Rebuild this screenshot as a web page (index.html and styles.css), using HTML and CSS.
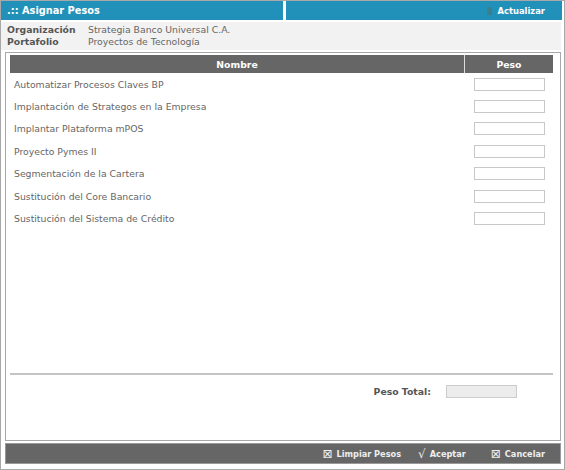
FILE: index.html
```html
<!DOCTYPE html>
<html lang="es">
<head>
<meta charset="utf-8">
<title>Asignar Pesos</title>
<link rel="stylesheet" href="styles.css">
</head>
<body>
<div class="page">
  <div class="topbar">
    <div class="tb-left">.:: Asignar Pesos</div>
    <div class="tb-right"><span class="tb-icon"></span>Actualizar</div>
  </div>
  <div class="info">
    <div class="info-row"><span class="info-label">Organización</span><span class="info-value">Strategia Banco Universal C.A.</span></div>
    <div class="info-row"><span class="info-label">Portafolio</span><span class="info-value">Proyectos de Tecnología</span></div>
  </div>
  <div class="panel">
    <div class="grid">
      <div class="grid-head">
        <div class="col-name">Nombre</div>
        <div class="col-peso">Peso</div>
      </div>
      <div class="grid-body">
        <div class="row"><div class="cell-name">Automatizar Procesos Claves BP</div><div class="cell-peso"><input class="peso-input" type="text"></div></div>
        <div class="row"><div class="cell-name">Implantación de Strategos en la Empresa</div><div class="cell-peso"><input class="peso-input" type="text"></div></div>
        <div class="row"><div class="cell-name">Implantar Plataforma mPOS</div><div class="cell-peso"><input class="peso-input" type="text"></div></div>
        <div class="row"><div class="cell-name">Proyecto Pymes II</div><div class="cell-peso"><input class="peso-input" type="text"></div></div>
        <div class="row"><div class="cell-name">Segmentación de la Cartera</div><div class="cell-peso"><input class="peso-input" type="text"></div></div>
        <div class="row"><div class="cell-name">Sustitución del Core Bancario</div><div class="cell-peso"><input class="peso-input" type="text"></div></div>
        <div class="row"><div class="cell-name">Sustitución del Sistema de Crédito</div><div class="cell-peso"><input class="peso-input" type="text"></div></div>
      </div>
    </div>
    <div class="total">
      <span class="total-label">Peso Total:</span>
      <input class="total-input" type="text" disabled>
    </div>
  </div>
  <div class="footer">
    <span class="btn"><span class="btn-ico">⊠</span>Limpiar Pesos</span>
    <span class="btn"><span class="btn-ico">√</span>Aceptar</span>
    <span class="btn"><span class="btn-ico">⊠</span>Cancelar</span>
  </div>
</div>
</body>
</html>
```
FILE: styles.css
```css
* { box-sizing: border-box; }
html, body { margin: 0; padding: 0; background: #fff; }
body {
  font-family: "DejaVu Sans", Verdana, sans-serif;
  font-size: 9.3px;
  color: #666;
}
.page {
  width: 565px;
  height: 470px;
  border: 1px solid #a8a8a8;
  display: flex;
  flex-direction: column;
}
.topbar {
  display: flex;
  gap: 3px;
  height: 19px;
  margin-right: 2px;
}
.tb-left, .tb-right {
  background: #2191b9;
  color: #fff;
  font-weight: bold;
  display: flex;
  align-items: center;
}
.tb-left { width: 282px; padding-left: 6px; font-size: 9.8px; }
.tb-right { flex: 1; justify-content: flex-end; padding-right: 17px; font-size: 8.4px; }
.tb-icon {
  width: 5px;
  height: 8px;
  background: #4f7266;
  opacity: 0.55;
  margin-right: 6px;
}
.info {
  margin: 2px 3px 0 0;
  background: #f2f2f2;
  height: 28px;
  padding: 1px 0 0 6px;
}
.info-row { display: flex; height: 12.5px; align-items: center; }
.info-label { width: 81px; font-weight: bold; color: #555; }
.info-value { color: #666; }
.panel {
  margin: 2px 3px 0 4px;
  border: 1px solid #a8a8a8;
  height: 389px;
  padding: 2px 7px 0 4px;
  display: flex;
  flex-direction: column;
}
.grid { flex: 1; display: flex; flex-direction: column; border-bottom: 2px solid #c4c4c4; }
.grid-head {
  display: flex;
  height: 18px;
  background: #666;
  color: #fff;
  font-weight: bold;
}
.col-name { flex: 1; display: flex; align-items: center; justify-content: center; border-right: 1px solid #ddd; }
.col-peso { width: 88px; display: flex; align-items: center; justify-content: center; }
.grid-body { padding-top: 0; }
.row { display: flex; height: 22.4px; align-items: center; }
.cell-name { flex: 1; padding-left: 4px; }
.cell-peso { width: 88px; display: flex; justify-content: center; }
.peso-input {
  width: 71px;
  height: 13px;
  border: 1px solid #c8c8c8;
  background: #fff;
  padding: 0;
  margin: 0;
}
.total {
  height: 65px;
  display: flex;
  align-items: flex-start;
  justify-content: flex-end;
  padding: 10px 36px 0 0;
  gap: 15px;
}
.total-label { font-weight: bold; color: #555; line-height: 13px; }
.total-input {
  width: 71px;
  height: 13px;
  border: 1px solid #ccc;
  background: #ececec;
  padding: 0;
  margin: 0;
}
.footer {
  margin: 2px 3px 0 4px;
  height: 21px;
  background: #666;
  border: 1px solid #999;
  display: flex;
  justify-content: flex-end;
  align-items: center;
  padding-right: 15px;
  color: #eee;
  font-weight: bold;
  font-size: 8.2px;
}
.btn { display: flex; align-items: center; }
.btn + .btn { margin-left: 17px; }
.btn:last-child { margin-left: 25px; }
.btn-ico { font-weight: normal; font-size: 12px; margin-right: 4px; line-height: 1; }
```
